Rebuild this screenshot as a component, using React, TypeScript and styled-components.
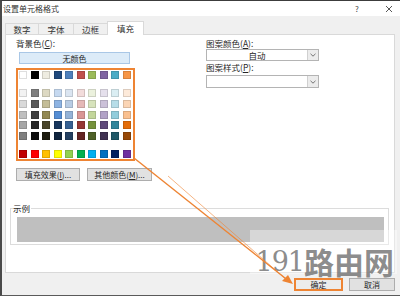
import React from 'react'
import styled, { createGlobalStyle } from 'styled-components'

const GlobalStyle = createGlobalStyle`
  html, body {
    margin: 0;
    padding: 0;
    background: #ffffff;
  }
  body {
    font-family: "Noto Sans CJK SC", "Noto Sans", sans-serif;
  }
`

const ORANGE = '#ee8433'

const themeColors = [
  '#ffffff', '#000000', '#eeece1', '#1f497d', '#4f81bd',
  '#c0504d', '#9bbb59', '#8064a2', '#4bacc6', '#f79646',
]

const tintRows = [
  ['#f2f2f2', '#7f7f7f', '#ddd9c3', '#c6d9f0', '#dbe5f1', '#f2dcdb', '#ebf1dd', '#e5e0ec', '#dbeef3', '#fdeada'],
  ['#d9d9d9', '#595959', '#c4bd97', '#8db3e2', '#b8cce4', '#e5b9b7', '#d7e3bc', '#ccc1d9', '#b7dde8', '#fbd5b5'],
  ['#bfbfbf', '#404040', '#938953', '#548dd4', '#95b3d7', '#d99694', '#c3d69b', '#b2a2c7', '#92cddc', '#fac08f'],
  ['#a6a6a6', '#262626', '#494429', '#17365d', '#366092', '#953734', '#76923c', '#5f497a', '#31859b', '#e36c09'],
  ['#808080', '#0d0d0d', '#1d1b10', '#0f243e', '#244061', '#632423', '#4f6128', '#3f3151', '#205867', '#974806'],
]

const standardColors = [
  '#c00000', '#ff0000', '#ffc000', '#ffff00', '#92d050',
  '#00b050', '#00b0f0', '#0070c0', '#002060', '#7030a0',
]

const Dialog = styled.div`
  position: relative;
  width: 400px;
  height: 296px;
  box-sizing: border-box;
  background: #f0f0f0;
  border-top: 1px solid #3c3c3c;
  border-left: 2px solid #4a4a4a;
  border-bottom: 1px solid #5a5a5a;
  display: flex;
  flex-direction: column;
  overflow: hidden;
  font-size: 8.5px;
  line-height: 11px;
  color: #262626;
`

const TitleBar = styled.div`
  height: 15px;
  background: #ffffff;
  display: flex;
  align-items: center;
  padding-left: 1px;
  font-size: 8px;
  color: #333;
`

const TitleText = styled.span`
  flex: 1;
`

const TitleIcon = styled.span<{ width: number }>`
  width: ${({ width }) => width}px;
  display: flex;
  justify-content: center;
  align-items: center;
  font-size: 8px;
  color: #444;
`

const TabStrip = styled.div`
  height: 18px;
  display: flex;
  align-items: flex-end;
  padding-left: 3px;
`

const Tab = styled.div<{ active?: boolean; width: number }>`
  position: relative;
  z-index: ${({ active }) => (active ? 2 : 1)};
  box-sizing: border-box;
  width: ${({ width }) => width}px;
  height: ${({ active }) => (active ? 14 : 11)}px;
  margin-right: -1px;
  margin-bottom: ${({ active }) => (active ? -1 : 0)}px;
  border: 1px solid #d9d9d9;
  border-bottom: none;
  background: ${({ active }) => (active ? '#ffffff' : '#f0f0f0')};
  display: flex;
  align-items: center;
  justify-content: center;
  color: #333;
`

const Panel = styled.div`
  box-sizing: border-box;
  margin-left: 3px;
  width: 390px;
  height: 239px;
  border: 1px solid #d9d9d9;
  background: #ffffff;
  padding: 3px 10px 0 10px;
`

const TopRow = styled.div`
  display: flex;
`

const LeftCol = styled.div`
  width: 119px;
  display: flex;
  flex-direction: column;
`

const RightCol = styled.div`
  width: 113px;
  margin-left: 71px;
  display: flex;
  flex-direction: column;
`

const Label = styled.div<{ top?: number }>`
  height: 11px;
  margin-top: ${({ top }) => top ?? 0}px;
  white-space: nowrap;
`

const NoColorButton = styled.div`
  box-sizing: border-box;
  margin: 3px 0 0 3px;
  width: 111px;
  height: 12px;
  border: 1px solid #a9c7e6;
  background: #dcebf8;
  display: flex;
  align-items: center;
  justify-content: center;
  font-size: 8px;
`

const Palette = styled.div`
  box-sizing: border-box;
  margin-top: 4px;
  width: 119px;
  border: 2px solid ${ORANGE};
  padding: 1px 2px 1px 1px;
  display: flex;
  flex-direction: column;
`

const SwatchRow = styled.div<{ top?: number }>`
  display: flex;
  justify-content: space-between;
  margin-top: ${({ top }) => top ?? 0}px;
`

const TintBlock = styled.div`
  display: flex;
  flex-direction: column;
  gap: 2.75px;
  margin-top: 10px;
`

const Swatch = styled.div`
  width: 8px;
  height: 8px;
  box-sizing: border-box;
  box-shadow: inset 0 0 0 1px rgba(0, 0, 0, 0.13);
`

const Select = styled.div<{ top?: number; h: number }>`
  box-sizing: border-box;
  margin-top: ${({ top }) => top ?? 0}px;
  height: ${({ h }) => h}px;
  border: 1px solid #b4b4b4;
  background: #ffffff;
  display: flex;
`

const SelectValue = styled.div`
  flex: 1;
  display: flex;
  align-items: center;
  justify-content: center;
  font-size: 8.5px;
`

const SelectArrow = styled.div`
  width: 10px;
  border-left: 1px solid #d0d0d0;
  background: #ececec;
  display: flex;
  align-items: center;
  justify-content: center;
`

const ButtonRow = styled.div`
  display: flex;
  gap: 7px;
  margin-top: 7px;
`

const Button = styled.div<{ width: number; primary?: boolean }>`
  box-sizing: border-box;
  width: ${({ width }) => width}px;
  height: 13px;
  border: ${({ primary }) => (primary ? `2px solid ${ORANGE}` : '1px solid #adadad')};
  background: ${({ primary }) => (primary ? '#ececec' : '#e1e1e1')};
  display: flex;
  align-items: center;
  justify-content: center;
  font-size: 8px;
  white-space: nowrap;
`

const Group = styled.fieldset`
  margin: 22px -5px 0 -6px;
  padding: 3px 4px 2px 6px;
  border: 1px solid #dcdcdc;
  min-width: 0;
`

const GroupLegend = styled.legend`
  margin-left: -4px;
  padding: 0 1px 0 0;
  line-height: 11px;
  font-size: 8.5px;
`

const Preview = styled.div`
  height: 25px;
  background: #bfbfbf;
`

const Footer = styled.div`
  flex: 1;
  display: flex;
  justify-content: flex-end;
  align-items: flex-start;
  gap: 6px;
  padding: 5px 5px 0 0;
`

const Watermark = styled.div`
  position: absolute;
  left: 248px;
  top: 229px;
  width: 147px;
  height: 44px;
  background: rgba(255, 255, 255, 0.38);
  display: flex;
  align-items: flex-end;
  justify-content: flex-end;
  padding-right: 3px;
  box-sizing: border-box;
  color: rgba(110, 110, 110, 0.8);
  white-space: nowrap;
`

const WatermarkDigits = styled.span`
  font-family: "DejaVu Serif", "Liberation Serif", serif;
  font-size: 27px;
  line-height: 24px;
  letter-spacing: -1px;
`

const WatermarkText = styled.span`
  font-family: "Noto Sans CJK SC", sans-serif;
  font-weight: 700;
  font-size: 30px;
  line-height: 26px;
`

const Overlay = styled.svg`
  position: absolute;
  left: -2px;
  top: -1px;
  pointer-events: none;
`

const Chevron = () => (
  <svg width="6" height="4" viewBox="0 0 6 4">
    <polyline points="0.5,0.8 3,3.2 5.5,0.8" fill="none" stroke="#666" strokeWidth="0.9" />
  </svg>
)

const CloseIcon = () => (
  <svg width="8" height="8" viewBox="0 0 8 8">
    <path d="M1 1 L7 7 M7 1 L1 7" stroke="#444" strokeWidth="0.9" />
  </svg>
)

const App: React.FC = () => {
  return (
    <>
      <GlobalStyle />
      <Dialog>
        <TitleBar>
          <TitleText>设置单元格格式</TitleText>
          <TitleIcon width={14}>?</TitleIcon>
          <TitleIcon width={18} />
          <TitleIcon width={14}>
            <CloseIcon />
          </TitleIcon>
          <TitleIcon width={4} />
        </TitleBar>

        <TabStrip>
          <Tab width={34}>数字</Tab>
          <Tab width={36}>字体</Tab>
          <Tab width={35}>边框</Tab>
          <Tab width={37} active>
            填充
          </Tab>
        </TabStrip>

        <Panel>
          <TopRow>
            <LeftCol>
              <Label>
                背景色(<u>C</u>):
              </Label>
              <NoColorButton>无颜色</NoColorButton>
              <Palette>
                <SwatchRow>
                  {themeColors.map((c) => (
                    <Swatch key={c} style={{ background: c }} />
                  ))}
                </SwatchRow>
                <TintBlock>
                  {tintRows.map((row, i) => (
                    <SwatchRow key={i}>
                      {row.map((c) => (
                        <Swatch key={c} style={{ background: c }} />
                      ))}
                    </SwatchRow>
                  ))}
                </TintBlock>
                <SwatchRow top={10}>
                  {standardColors.map((c) => (
                    <Swatch key={c} style={{ background: c }} />
                  ))}
                </SwatchRow>
              </Palette>
            </LeftCol>

            <RightCol>
              <Label>
                图案颜色(<u>A</u>):
              </Label>
              <Select h={12}>
                <SelectValue>自动</SelectValue>
                <SelectArrow>
                  <Chevron />
                </SelectArrow>
              </Select>
              <Label top={1}>
                图案样式(<u>P</u>):
              </Label>
              <Select top={2} h={13}>
                <SelectValue />
                <SelectArrow>
                  <Chevron />
                </SelectArrow>
              </Select>
            </RightCol>
          </TopRow>

          <ButtonRow>
            <Button width={64}>
              填充效果(<u>I</u>)...
            </Button>
            <Button width={65}>
              其他颜色(<u>M</u>)...
            </Button>
          </ButtonRow>

          <Group>
            <GroupLegend>示例</GroupLegend>
            <Preview />
          </Group>
        </Panel>

        <Footer>
          <Button width={49} primary>
            确定
          </Button>
          <Button width={46}>取消</Button>
        </Footer>

        <Watermark>
          <WatermarkDigits>191</WatermarkDigits>
          <WatermarkText>路由网</WatermarkText>
        </Watermark>

        <Overlay width="400" height="296" viewBox="0 0 400 296">
          <line x1="134" y1="158" x2="290" y2="282" stroke={ORANGE} strokeWidth="1.4" />
          <line x1="168" y1="176" x2="288" y2="281" stroke={ORANGE} strokeOpacity="0.6" strokeWidth="1" />
          <polygon points="293,284 282,281 288,275" fill={ORANGE} />
        </Overlay>
      </Dialog>
    </>
  )
}

export default App
